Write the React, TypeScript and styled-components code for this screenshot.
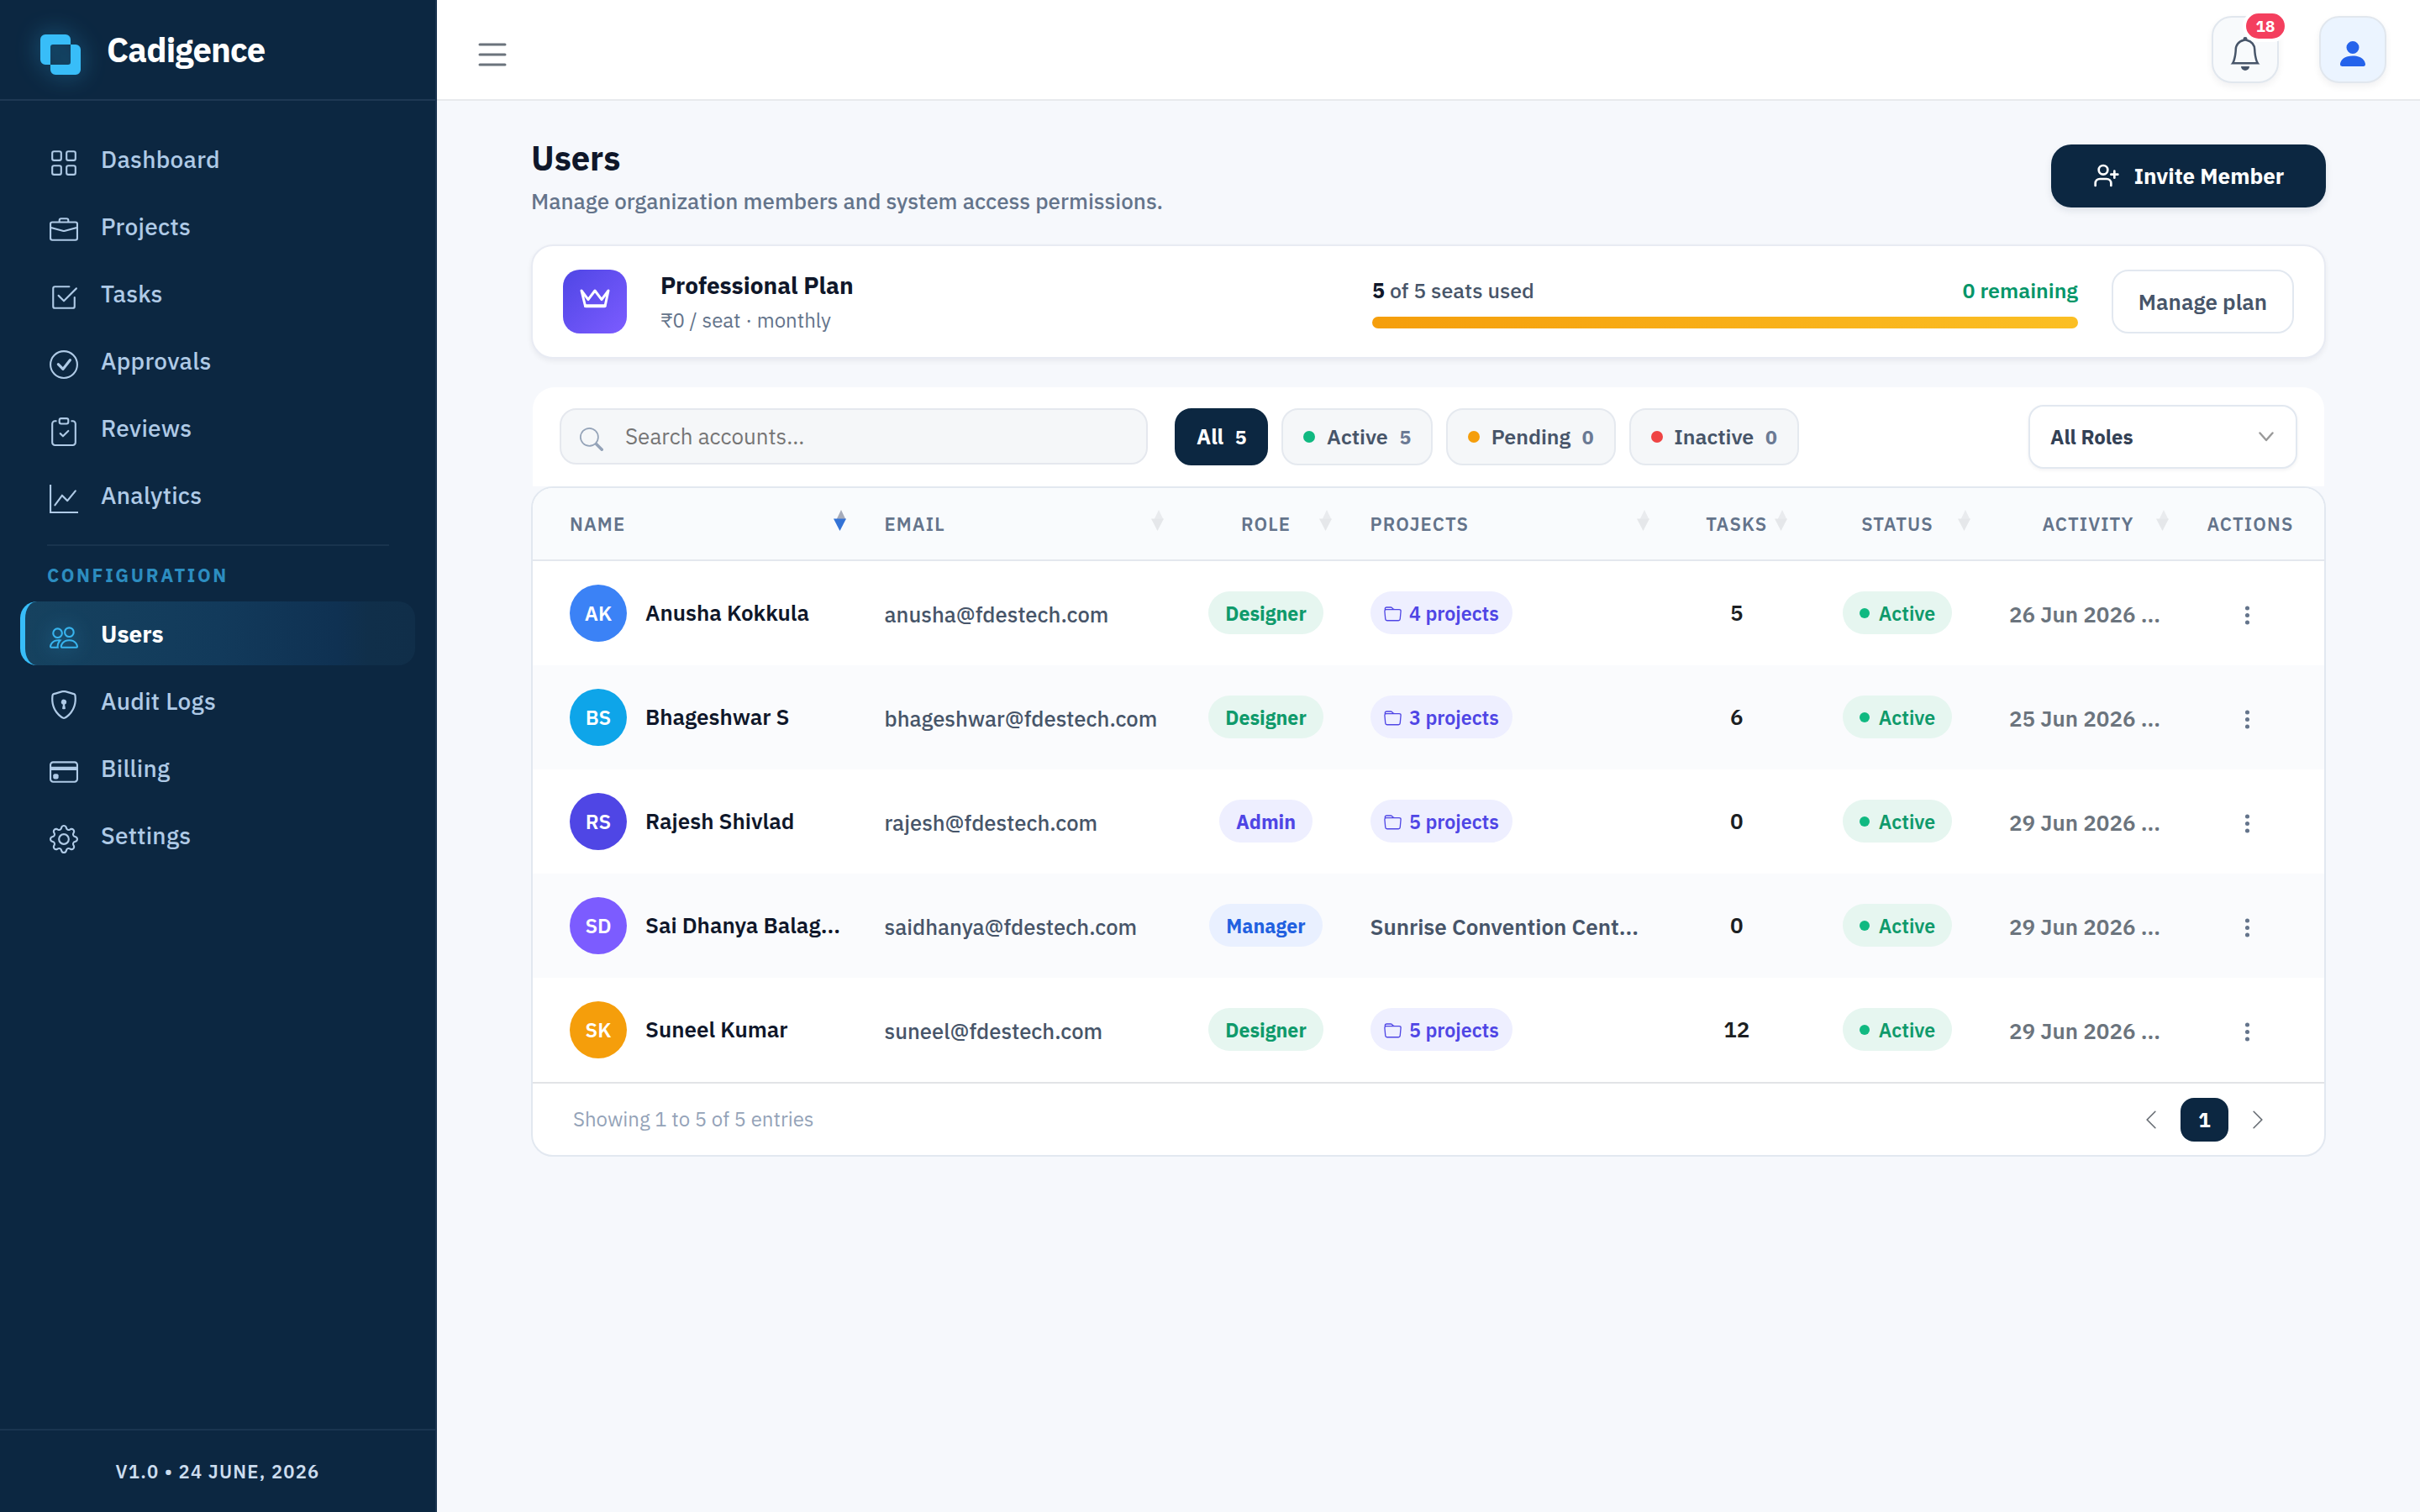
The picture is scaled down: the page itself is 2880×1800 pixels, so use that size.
import React from "react";
import styled, { createGlobalStyle, css } from "styled-components";
import type { IconType } from "react-icons";
import {
  BsGrid,
  BsBriefcase,
  BsCheck2Square,
  BsCheckCircle,
  BsClipboardCheck,
  BsGraphUp,
  BsPeople,
  BsShieldLock,
  BsCreditCard,
  BsGear,
  BsBell,
  BsPersonFill,
  BsList,
  BsSearch,
  BsFolder,
  BsThreeDotsVertical,
  BsChevronLeft,
  BsChevronRight,
} from "react-icons/bs";
import { UserPlus } from "lucide-react";

const navy = "#0c2741";
const line = "#e2e8f0";

const GlobalStyle = createGlobalStyle`
  *, *::before, *::after { box-sizing: border-box; }
  body {
    margin: 0;
    background: #f6f8fc;
    font-family: "IBM Plex Sans", "Open Sans", "Noto Sans", sans-serif;
    color: #0f172a;
  }
  svg { display: block; flex: none; }
  button { font-family: inherit; }
`;

const Shell = styled.div`
  display: grid;
  grid-template-columns: 520px 1fr;
  height: 1800px;
  overflow: hidden;
`;

/* ---------- Sidebar ---------- */

const Sidebar = styled.aside`
  display: flex;
  flex-direction: column;
  background: ${navy};
  border-right: 2px solid #1a3450;
`;

const Brand = styled.div`
  display: flex;
  align-items: center;
  gap: 31px;
  height: 120px;
  padding-left: 48px;
  border-bottom: 2px solid #1e3853;
`;

const LogoMark = styled.svg`
  width: 48px;
  height: 48px;
  margin-top: 12px;
  filter: drop-shadow(0 0 14px rgba(56, 189, 248, 0.4));
`;

const BrandName = styled.span`
  font-size: 40px;
  font-weight: 700;
  letter-spacing: -0.8px;
  color: #fff;
`;

const Nav = styled.nav`
  flex: 1;
  display: flex;
  flex-direction: column;
  gap: 4px;
  padding: 31px 24px 0;
`;

const NavItem = styled.a<{ $active?: boolean }>`
  display: flex;
  align-items: center;
  gap: 27px;
  height: 76px;
  padding-left: 29px;
  border-left: 6px solid transparent;
  border-radius: 20px;
  font-size: 28px;
  font-weight: 500;
  letter-spacing: 0.28px;
  color: #afcae6;
  svg {
    width: 34px;
    height: 34px;
    margin-top: 9px;
  }
  ${(p) =>
    p.$active &&
    css`
      border-left-color: #38bdf8;
      background: linear-gradient(90deg, #16425f 0%, #123a5b 50%, #0f3152 80%, #102f4a 88%, #102e49 100%);
      color: #fff;
      font-weight: 700;
      letter-spacing: 0;
      svg {
        color: #38b4ee;
        filter: drop-shadow(0 0 12px rgba(56, 189, 248, 0.45));
      }
    `}
`;

const NavDivider = styled.div`
  height: 2px;
  margin: 17px 31px 16px 32px;
  background: #19344e;
`;

const NavHeading = styled.div`
  padding-left: 32px;
  margin-bottom: 12px;
  font-size: 22px;
  line-height: 30px;
  font-weight: 700;
  letter-spacing: 2.65px;
  color: #2c8dc0;
`;

const Version = styled.footer`
  display: flex;
  align-items: center;
  justify-content: center;
  height: 99px;
  border-top: 2px solid #1a3550;
  font-size: 22px;
  font-weight: 600;
  letter-spacing: 1.2px;
  color: #cbdcee;
`;

/* ---------- Top bar ---------- */

const Main = styled.div`
  display: flex;
  flex-direction: column;
  min-width: 0;
`;

const TopBar = styled.header`
  display: flex;
  align-items: center;
  gap: 48px;
  height: 120px;
  padding: 0 40px 0 42px;
  background: #fff;
  border-bottom: 2px solid #e8eaed;
`;

const MenuButton = styled.button`
  margin: 11px auto 0 0;
  padding: 0;
  border: 0;
  background: none;
  color: #6b737c;
  svg {
    width: 48px;
    height: 48px;
  }
`;

const TopButton = styled.button<{ $tint?: boolean }>`
  position: relative;
  display: flex;
  align-items: center;
  justify-content: center;
  width: 80px;
  height: 80px;
  padding: 10px 0 0;
  border: 2px solid #e1e7ee;
  border-radius: 24px;
  background: ${(p) => (p.$tint ? "#ebf4ff" : "#f8fafc")};
  color: ${(p) => (p.$tint ? "#2563eb" : "#475569")};
  box-shadow: 0 4px 8px rgba(15, 23, 42, 0.06);
  svg {
    width: 40px;
    height: 40px;
  }
`;

const Badge = styled.span`
  position: absolute;
  top: -9px;
  right: -13px;
  display: flex;
  align-items: center;
  justify-content: center;
  width: 54px;
  height: 38px;
  border: 4px solid #fff;
  border-radius: 19px;
  background: #f43f5e;
  color: #fff;
  font-size: 19px;
  font-weight: 700;
`;

/* ---------- Page ---------- */

const Page = styled.main`
  display: flex;
  flex-direction: column;
  padding: 42px 112px 0;
`;

const PageHead = styled.div`
  display: flex;
  align-items: center;
  justify-content: space-between;
  margin-bottom: 35px;
`;

const Title = styled.h1`
  margin: 0 0 8px;
  font-size: 40px;
  line-height: 52px;
  font-weight: 700;
  letter-spacing: -0.1px;
`;

const Subtitle = styled.p`
  margin: 0;
  font-size: 26px;
  line-height: 34px;
  font-weight: 500;
  color: #64748b;
`;

const InviteButton = styled.button`
  display: flex;
  align-items: center;
  justify-content: center;
  gap: 17px;
  width: 327px;
  height: 75px;
  padding: 0;
  border: 0;
  border-radius: 24px;
  background: ${navy};
  color: #fff;
  font-size: 26px;
  font-weight: 700;
  box-shadow: 0 4px 8px rgba(15, 39, 65, 0.1);
  svg {
    width: 32px;
    height: 32px;
  }
`;

const PlanCard = styled.section`
  display: flex;
  align-items: center;
  height: 136px;
  margin-bottom: 34px;
  padding: 0 36px;
  background: #fff;
  border: 2px solid #e8ebf3;
  border-radius: 26px;
  box-shadow: 0 3px 6px rgba(15, 23, 42, 0.06);
`;

const PlanTile = styled.div`
  display: flex;
  justify-content: center;
  width: 76px;
  height: 76px;
  padding-top: 20px;
  border-radius: 20px;
  background: linear-gradient(135deg, #4f46e5, #7c5cff);
`;

const PlanText = styled.div`
  margin-left: 40px;
`;

const PlanName = styled.div`
  margin-bottom: 8px;
  font-size: 28px;
  line-height: 36px;
  font-weight: 700;
`;

const PlanPrice = styled.div`
  font-size: 24px;
  line-height: 31px;
  color: #64748b;
`;

const Seats = styled.div`
  width: 840px;
  margin: 3px 40px 0 auto;
`;

const SeatsRow = styled.div`
  display: flex;
  justify-content: space-between;
  margin-bottom: 15px;
  font-size: 25px;
  line-height: 32px;
  font-weight: 500;
  color: #475569;
  b {
    font-weight: 700;
    color: #0f172a;
  }
`;

const Remaining = styled.span`
  font-weight: 600;
  color: #059669;
`;

const Meter = styled.div`
  height: 14px;
  border-radius: 7px;
  background: linear-gradient(90deg, #f59e0b, #fbbf24);
`;

const PlanButton = styled.button`
  width: 217px;
  height: 76px;
  padding: 0;
  border: 2px solid ${line};
  border-radius: 20px;
  background: #fff;
  color: #475569;
  font-size: 26px;
  font-weight: 600;
`;

/* ---------- Toolbar ---------- */

const Toolbar = styled.section`
  display: flex;
  align-items: center;
  height: 118px;
  margin: 0 2px;
  padding: 0 32px;
  background: #fff;
  border-radius: 26px 26px 0 0;
`;

const SearchBox = styled.label`
  display: flex;
  align-items: center;
  gap: 26px;
  width: 700px;
  height: 67px;
  margin: 0 32px 1px 0;
  padding: 0 0 1px 22px;
  border: 2px solid #e5e8ee;
  border-radius: 20px;
  background: #f5f7f9;
  font-size: 26px;
  color: #757575;
  svg {
    width: 28px;
    height: 28px;
    margin-top: 7px;
    color: #94a3b8;
  }
`;

const Filters = styled.div`
  display: flex;
  gap: 16px;
`;

const FilterPill = styled.button<{ $active?: boolean }>`
  display: flex;
  align-items: center;
  gap: 13.6px;
  height: 68px;
  padding: 0 24px 1px;
  border: 2px solid ${(p) => (p.$active ? navy : "#e5e9ef")};
  border-radius: 20px;
  background: ${(p) => (p.$active ? navy : "#f5f7f9")};
  color: ${(p) => (p.$active ? "#fff" : "#475569")};
  font-size: 25px;
  font-weight: ${(p) => (p.$active ? 700 : 600)};
`;

const Count = styled.span<{ $active?: boolean }>`
  font-size: 23px;
  font-weight: 700;
  color: ${(p) => (p.$active ? "#fff" : "#6b7a94")};
`;

const Dot = styled.i<{ $color: string; $size: number }>`
  width: ${(p) => p.$size}px;
  height: ${(p) => p.$size}px;
  border-radius: 50%;
  background: ${(p) => p.$color};
`;

const RoleSelect = styled.button`
  display: flex;
  align-items: center;
  justify-content: space-between;
  width: 320px;
  height: 76px;
  margin-left: auto;
  padding: 0 26px 0 24px;
  border: 2px solid ${line};
  border-radius: 18px;
  background: #fff;
  color: #334155;
  font-size: 24px;
  font-weight: 700;
  box-shadow: 0 2px 4px rgba(15, 23, 42, 0.05);
`;

/* ---------- Table ---------- */

const TableCard = styled.section`
  border: 2px solid ${line};
  border-radius: 26px;
  background: #fff;
  overflow: hidden;
`;

const columns = "394.5px 378px 200px 378px 164.5px 218px 236px 150px";

const HeadRow = styled.div`
  display: grid;
  grid-template-columns: ${columns};
  height: 87px;
  background: #f9fbfd;
  border-bottom: 2px solid #e4e8ee;
`;

const HeadCell = styled.div<{ $pad?: number }>`
  position: relative;
  display: flex;
  align-items: center;
  justify-content: ${(p) => (p.$pad ? "flex-start" : "center")};
  padding-left: ${(p) => p.$pad || 0}px;
  font-size: 22px;
  font-weight: 600;
  letter-spacing: 1.1px;
  color: #64748b;
`;

const SortMark = styled.svg`
  position: absolute;
  top: 26px;
  right: 22px;
  width: 15px;
  height: 25px;
`;

const Row = styled.div<{ $striped?: boolean }>`
  display: grid;
  grid-template-columns: ${columns};
  height: 124px;
  background: ${(p) => (p.$striped ? "#fafbfd" : "#fff")};
  font-size: 26px;
`;

const Cell = styled.div<{ $center?: boolean; $low?: boolean }>`
  display: flex;
  align-items: center;
  justify-content: ${(p) => (p.$center ? "center" : "flex-start")};
  min-width: 0;
  padding: ${(p) => (p.$low ? "2px" : "0")} ${(p) => (p.$center ? 0 : 24)}px ${(p) => (p.$low ? "0" : "1px")};
`;

const NameCell = styled(Cell)`
  padding: 0 22px 0 44px;
  gap: 22px;
`;

const Avatar = styled.span<{ $color: string }>`
  flex: none;
  display: flex;
  align-items: center;
  justify-content: center;
  width: 68px;
  height: 68px;
  border-radius: 50%;
  background: ${(p) => p.$color};
  color: #fff;
  font-size: 24px;
  font-weight: 600;
`;

const Clip = styled.span`
  min-width: 0;
  overflow: hidden;
  white-space: nowrap;
  text-overflow: ellipsis;
`;

const UserName = styled(Clip)`
  margin-bottom: 2px;
  font-weight: 600;
`;

const Email = styled.span`
  font-size: 25.6px;
  font-weight: 500;
  color: #475569;
`;

const tones = {
  green: { bg: "#e6f6f0", fg: "#0f9a6b" },
  indigo: { bg: "#eeefff", fg: "#4f46e5" },
  blue: { bg: "#e9f0ff", fg: "#2160e0" },
};

const Tag = styled.span<{ $tone: keyof typeof tones; $weight?: number; $pad: number; $gap?: number }>`
  display: flex;
  align-items: center;
  gap: ${(p) => p.$gap || 0}px;
  height: 51px;
  padding: 0 ${(p) => p.$pad}px;
  border-radius: 26px;
  background: ${(p) => tones[p.$tone].bg};
  color: ${(p) => tones[p.$tone].fg};
  font-size: 23.2px;
  font-weight: ${(p) => p.$weight || 600};
  svg {
    width: 21px;
    height: 21px;
    margin-top: 4px;
  }
`;

const ProjectName = styled(Clip)`
  font-weight: 600;
  color: #475569;
`;

const TaskCount = styled.span`
  margin-bottom: 1px;
  font-weight: 600;
  color: #1c1f23;
`;

const LastSeen = styled.span`
  font-weight: 600;
  color: #6b747d;
  white-space: nowrap;
`;

const RowMenu = styled.button`
  padding: 0;
  margin: 5px 8px 0 0;
  border: 0;
  background: none;
  color: #64748b;
  svg {
    width: 27px;
    height: 27px;
  }
`;

const TableFoot = styled.div`
  display: flex;
  align-items: center;
  justify-content: space-between;
  height: 87px;
  padding: 0 66px 0 48px;
  border-top: 2px solid #e2e4e6;
  font-size: 24px;
  color: #94a3b8;
`;

const Pager = styled.div`
  display: flex;
  align-items: center;
  gap: 22px;
  color: #666c73;
  svg {
    width: 26px;
    height: 26px;
  }
`;

const Entries = styled.span`
  margin-bottom: 1px;
`;

const PageNumber = styled.span`
  display: flex;
  align-items: center;
  justify-content: center;
  width: 57px;
  height: 52px;
  border-radius: 16px;
  background: ${navy};
  color: #fff;
  font-size: 24px;
  font-weight: 700;
`;

/* ---------- Data ---------- */

const mainNav: [string, IconType][] = [
  ["Dashboard", BsGrid],
  ["Projects", BsBriefcase],
  ["Tasks", BsCheck2Square],
  ["Approvals", BsCheckCircle],
  ["Reviews", BsClipboardCheck],
  ["Analytics", BsGraphUp],
];

const configNav: [string, IconType][] = [
  ["Users", BsPeople],
  ["Audit Logs", BsShieldLock],
  ["Billing", BsCreditCard],
  ["Settings", BsGear],
];

const filters = [
  { label: "All", count: 5 },
  { label: "Active", count: 5, color: "#10b981" },
  { label: "Pending", count: 0, color: "#f59e0b" },
  { label: "Inactive", count: 0, color: "#ef4444" },
];

const headings = [
  { label: "NAME", pad: 44, sort: "asc" },
  { label: "EMAIL", pad: 24, sort: "none" },
  { label: "ROLE", sort: "none" },
  { label: "PROJECTS", pad: 24, sort: "none" },
  { label: "TASKS", sort: "none" },
  { label: "STATUS", sort: "none" },
  { label: "ACTIVITY", sort: "none" },
  { label: "ACTIONS" },
];

type User = {
  initials: string;
  color: string;
  name: string;
  email: string;
  role: string;
  tone: keyof typeof tones;
  projects: number | string;
  tasks: number;
  seen: string;
};

const users: User[] = [
  { initials: "AK", color: "#3b82f6", name: "Anusha Kokkula", email: "anusha@fdestech.com", role: "Designer", tone: "green", projects: 4, tasks: 5, seen: "26 Jun 2026 ..." },
  { initials: "BS", color: "#0ea5e9", name: "Bhageshwar S", email: "bhageshwar@fdestech.com", role: "Designer", tone: "green", projects: 3, tasks: 6, seen: "25 Jun 2026 ..." },
  { initials: "RS", color: "#4f46e5", name: "Rajesh Shivlad", email: "rajesh@fdestech.com", role: "Admin", tone: "indigo", projects: 5, tasks: 0, seen: "29 Jun 2026 ..." },
  { initials: "SD", color: "#7c5cff", name: "Sai Dhanya Balag...", email: "saidhanya@fdestech.com", role: "Manager", tone: "blue", projects: "Sunrise Convention Cent...", tasks: 0, seen: "29 Jun 2026 ..." },
  { initials: "SK", color: "#f59e0b", name: "Suneel Kumar", email: "suneel@fdestech.com", role: "Designer", tone: "green", projects: 5, tasks: 12, seen: "29 Jun 2026 ..." },
];

function Sort({ active }: { active: boolean }) {
  return (
    <SortMark viewBox="0 0 15 25">
      <path d="M9 0 L14.5 11.5 H3.5 Z" fill={active ? "#a6abba" : "#e9ebee"} />
      <path d="M0 10.5 H15 L7.5 25 Z" fill={active ? "#3473d6" : "#e5e7ea"} />
    </SortMark>
  );
}

export default function App() {
  return (
    <>
      <GlobalStyle />
      <Shell>
        <Sidebar>
          <Brand>
            <LogoMark viewBox="0 0 48 48">
              <path
                fillRule="evenodd"
                fill="#38bdf8"
                d="M6 0H30A6 6 0 0 1 36 6V12H42A6 6 0 0 1 48 18V42A6 6 0 0 1 42 48H18A6 6 0 0 1 12 42V36H6A6 6 0 0 1 0 30V6A6 6 0 0 1 6 0ZM15 12A3 3 0 0 0 12 15V36H33A3 3 0 0 0 36 33V12Z"
              />
            </LogoMark>
            <BrandName>Cadigence</BrandName>
          </Brand>
          <Nav>
            {mainNav.map(([label, Icon]) => (
              <NavItem key={label}>
                <Icon />
                {label}
              </NavItem>
            ))}
            <NavDivider />
            <NavHeading>CONFIGURATION</NavHeading>
            {configNav.map(([label, Icon]) => (
              <NavItem key={label} $active={label === "Users"}>
                <Icon />
                {label}
              </NavItem>
            ))}
          </Nav>
          <Version>V1.0 • 24 JUNE, 2026</Version>
        </Sidebar>

        <Main>
          <TopBar>
            <MenuButton aria-label="Toggle menu">
              <BsList />
            </MenuButton>
            <TopButton aria-label="Notifications">
              <BsBell />
              <Badge>18</Badge>
            </TopButton>
            <TopButton $tint aria-label="Account">
              <BsPersonFill />
            </TopButton>
          </TopBar>

          <Page>
            <PageHead>
              <div>
                <Title>Users</Title>
                <Subtitle>Manage organization members and system access permissions.</Subtitle>
              </div>
              <InviteButton>
                <UserPlus />
                Invite Member
              </InviteButton>
            </PageHead>

            <PlanCard>
              <PlanTile>
                <svg width="40" height="28" viewBox="0 0 40 28" fill="none" stroke="#fff" strokeLinejoin="round" strokeLinecap="round">
                  <path d="M4 5 L8.6 23.6 H32 L36 5 L28 15.6 L20 5 L12 15.6 Z" strokeWidth="3" />
                  <path d="M9 23.2 H31.4" strokeWidth="4" />
                </svg>
              </PlanTile>
              <PlanText>
                <PlanName>Professional Plan</PlanName>
                <PlanPrice>₹0 / seat · monthly</PlanPrice>
              </PlanText>
              <Seats>
                <SeatsRow>
                  <span>
                    <b>5</b> of 5 seats used
                  </span>
                  <Remaining>0 remaining</Remaining>
                </SeatsRow>
                <Meter />
              </Seats>
              <PlanButton>Manage plan</PlanButton>
            </PlanCard>

            <Toolbar>
              <SearchBox>
                <BsSearch />
                Search accounts...
              </SearchBox>
              <Filters>
                {filters.map((f) => (
                  <FilterPill key={f.label} $active={!f.color}>
                    {f.color && <Dot $color={f.color} $size={14} />}
                    {f.label}
                    <Count $active={!f.color}>{f.count}</Count>
                  </FilterPill>
                ))}
              </Filters>
              <RoleSelect>
                All Roles
                <svg width="18" height="12" viewBox="0 0 18 12" fill="none" stroke="#999" strokeWidth="2.4" strokeLinecap="round" strokeLinejoin="round">
                  <path d="M1.5 1.5 L9 10 L16.5 1.5" />
                </svg>
              </RoleSelect>
            </Toolbar>

            <TableCard>
              <HeadRow>
                {headings.map((h) => (
                  <HeadCell key={h.label} $pad={h.pad}>
                    {h.label}
                    {h.sort && <Sort active={h.sort === "asc"} />}
                  </HeadCell>
                ))}
              </HeadRow>
              {users.map((u, i) => (
                <Row key={u.initials} $striped={i % 2 === 1}>
                  <NameCell>
                    <Avatar $color={u.color}>{u.initials}</Avatar>
                    <UserName>{u.name}</UserName>
                  </NameCell>
                  <Cell $low>
                    <Email>{u.email}</Email>
                  </Cell>
                  <Cell $center>
                    <Tag $tone={u.tone} $weight={700} $pad={20}>
                      {u.role}
                    </Tag>
                  </Cell>
                  <Cell $low={typeof u.projects === "string"}>
                    {typeof u.projects === "string" ? (
                      <ProjectName>{u.projects}</ProjectName>
                    ) : (
                      <Tag $tone="indigo" $pad={16.5} $gap={9}>
                        <BsFolder />
                        {u.projects} projects
                      </Tag>
                    )}
                  </Cell>
                  <Cell $center>
                    <TaskCount>{u.tasks}</TaskCount>
                  </Cell>
                  <Cell $center>
                    <Tag $tone="green" $pad={20} $gap={11}>
                      <Dot $color="#10b981" $size={12} />
                      Active
                    </Tag>
                  </Cell>
                  <Cell $low>
                    <LastSeen>{u.seen}</LastSeen>
                  </Cell>
                  <Cell $center>
                    <RowMenu aria-label="Row actions">
                      <BsThreeDotsVertical />
                    </RowMenu>
                  </Cell>
                </Row>
              ))}
              <TableFoot>
                <Entries>Showing 1 to 5 of 5 entries</Entries>
                <Pager>
                  <BsChevronLeft />
                  <PageNumber>1</PageNumber>
                  <BsChevronRight />
                </Pager>
              </TableFoot>
            </TableCard>
          </Page>
        </Main>
      </Shell>
    </>
  );
}
